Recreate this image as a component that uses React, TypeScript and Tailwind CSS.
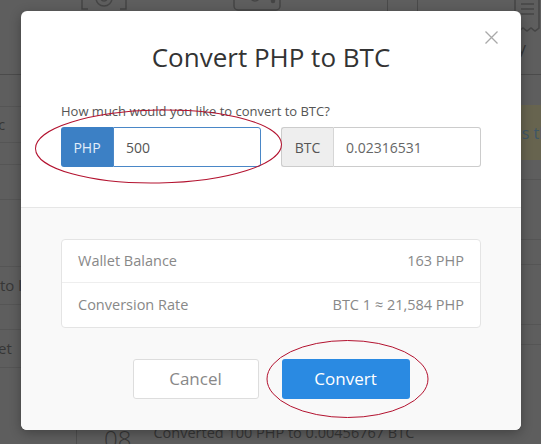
import React from 'react';

const font = "font-['Open_Sans','Liberation_Sans',sans-serif]";

const CloseIcon = () => (
  <svg width="13" height="13" viewBox="0 0 13 13" fill="none" stroke="#a9a9a9" strokeWidth="1.3">
    <path d="M0.5 0.5 L12.5 12.5 M12.5 0.5 L0.5 12.5" />
  </svg>
);

// dimmed page behind the modal
const BackgroundPage = () => (
  <div className="flex flex-col w-full h-full text-[#363636]">
    <div className="h-[75px] shrink-0 border-b border-[#4b4b4b] flex items-start">
      <svg className="ml-[80px] -mt-[12px]" width="48" height="24" viewBox="0 0 48 24" fill="none" stroke="#454545" strokeWidth="1.5">
        <path d="M2 0 V21 H8 M40 21 H46 V0" />
        <circle cx="24" cy="10" r="8" />
        <circle cx="24" cy="10" r="3" />
      </svg>
      <svg className="ml-[105px] -mt-[12px]" width="48" height="24" viewBox="0 0 48 24" fill="none" stroke="#454545" strokeWidth="1.5">
        <rect x="1" y="1" width="46" height="21" rx="4" />
        <circle cx="22" cy="8" r="5" />
        <circle cx="40" cy="13" r="1.5" fill="#454545" />
      </svg>
      <div className="ml-[106px] w-[31px] h-[30px] border-x border-[#4a4a4a]" />
      <div className="ml-auto flex flex-col items-start w-[29px] overflow-hidden">
        <svg width="29" height="32" viewBox="0 0 29 32" fill="none" stroke="#454545" strokeWidth="1.5">
          <path d="M3 0 V28 L7 31 L11 28 L15 31 L19 28 L23 31 L27 28 V0" />
          <path d="M9 4 H22 M9 9 H22 M9 14 H22" />
        </svg>
        <span className="text-[17px] leading-[20px] mt-[6px] -ml-[4px]">ay</span>
      </div>
    </div>
    <div className="flex flex-1 min-h-0">
      <div className="w-[77px] shrink-0 flex flex-col text-[15px]">
        <div className="h-[32px] border-b border-[#555]" />
        <div className="h-[36px] border-b border-[#555] flex items-center -ml-[2px]">c</div>
        <div className="h-[22px] border-b border-[#555]" />
        <div className="h-[35px] border-b border-[#555]" />
        <div className="h-[67px] border-b border-[#555]" />
        <div className="h-[38px] border-b border-[#555] flex items-center">to l</div>
        <div className="h-[25px] border-b border-[#555]" />
        <div className="h-[38px] border-b border-[#555] flex items-center -ml-[2px]">et</div>
        <div className="flex-1 border-r border-[#4e4e4e]" />
      </div>
      <div className="flex-1 min-w-0 flex flex-col">
        <div className="h-[30px] shrink-0" />
        <div className="h-[55px] shrink-0 bg-[#67644f] flex items-center justify-end overflow-hidden text-[16px] text-[#3e5667]">
          <span className="-mr-[8px]">is th</span>
        </div>
        <div className="h-[20px] shrink-0 border-b border-[#555]" />
        <div className="h-[60px] shrink-0 border-b border-[#555]" />
        <div className="h-[25px] shrink-0 border-b border-[#555]" />
        <div className="h-[60px] shrink-0 border-b border-[#555]" />
        <div className="h-[20px] shrink-0 border-b border-[#555]" />
        <div className="flex-1" />
        <div className="h-[20px] shrink-0 flex items-start gap-[22px] pl-[27px] whitespace-nowrap">
          <span className="text-[24px] leading-[26px] font-light mt-[2px]">08</span>
          <span className="text-[14.5px] leading-[20px] -mt-[1px]">Converted 100 PHP to 0.00456767 BTC</span>
        </div>
      </div>
    </div>
  </div>
);

const InputGroup = ({ addon, value, active }: { addon: string; value: string; active?: boolean }) => (
  <div className="flex w-[200px] h-[40px] text-[14px]">
    <div
      className={`w-[52px] shrink-0 flex items-center justify-center rounded-l-[3px] ${
        active ? 'bg-[#3c80c5] text-[#e3eefa]' : 'bg-[#eeeeee] text-[#555] border border-r-0 border-[#cccccc]'
      }`}
    >
      {addon}
    </div>
    <div
      className={`flex-1 flex items-center rounded-r-[3px] bg-white border pl-[12px] ${
        active ? 'border-[#4a87c7] text-[#555]' : 'border-[#cccccc] border-l-[#d6d6d6] text-[#666]'
      }`}
    >
      {value}
    </div>
  </div>
);

const ConvertModal = () => (
  <div className="w-[500px] rounded-[6px] overflow-hidden bg-white shadow-[0_3px_12px_rgba(0,0,0,0.3)]">
    <div className="relative px-[40px] pt-[28px] pb-[40px]">
      <button className="absolute right-[23px] top-[20px]">
        <CloseIcon />
      </button>
      <h2 className="text-center text-[26px] leading-[36px] text-[#333]">Convert PHP to BTC</h2>
      <p className="mt-[27px] text-[13px] leading-[18px] text-[#555]">How much would you like to convert to BTC?</p>
      <div className="mt-[7px] flex gap-[20px]">
        <InputGroup addon="PHP" value="500" active />
        <InputGroup addon="BTC" value="0.02316531" />
      </div>
    </div>
    <div className="border-t border-[#e6e6e6] bg-[#f9f9f9] px-[40px] pt-[31px] pb-[31px]">
      <div className="bg-white border border-[#e4e4e4] rounded-[4px] text-[14.5px] text-[#888]">
        <div className="h-[43px] flex items-center justify-between pl-[16px] pr-[16px] border-b border-[#eeeeee]">
          <span>Wallet Balance</span>
          <span>163 PHP</span>
        </div>
        <div className="h-[44px] flex items-center justify-between pl-[16px] pr-[16px]">
          <span>Conversion Rate</span>
          <span>BTC 1 ≈ 21,584 PHP</span>
        </div>
      </div>
      <div className="mt-[31px] flex justify-center gap-[23px]">
        <button className="w-[126px] h-[40px] bg-white border border-[#dddddd] rounded-[3px] text-[17px] text-[#888]">
          Cancel
        </button>
        <button className="w-[128px] h-[40px] bg-[#2a8ae2] rounded-[3px] text-[17px] text-white">
          Convert
        </button>
      </div>
    </div>
  </div>
);

export default function App() {
  return (
    <div className={`relative w-[541px] h-[444px] overflow-hidden bg-[#5e5e5e] ${font}`}>
      <BackgroundPage />
      <div className="absolute inset-0 flex justify-center items-start pt-[11px] pl-[1px]">
        <ConvertModal />
      </div>
      {/* red annotation circles drawn over the screenshot */}
      <svg className="absolute inset-0 pointer-events-none" width="541" height="444" fill="none" stroke="#b3122f" strokeWidth="1">
        <ellipse cx="158.5" cy="146.5" rx="123" ry="36.5" transform="rotate(-1 158.5 146.5)" />
        <ellipse cx="347.5" cy="379" rx="80.5" ry="38.5" />
      </svg>
    </div>
  );
}
